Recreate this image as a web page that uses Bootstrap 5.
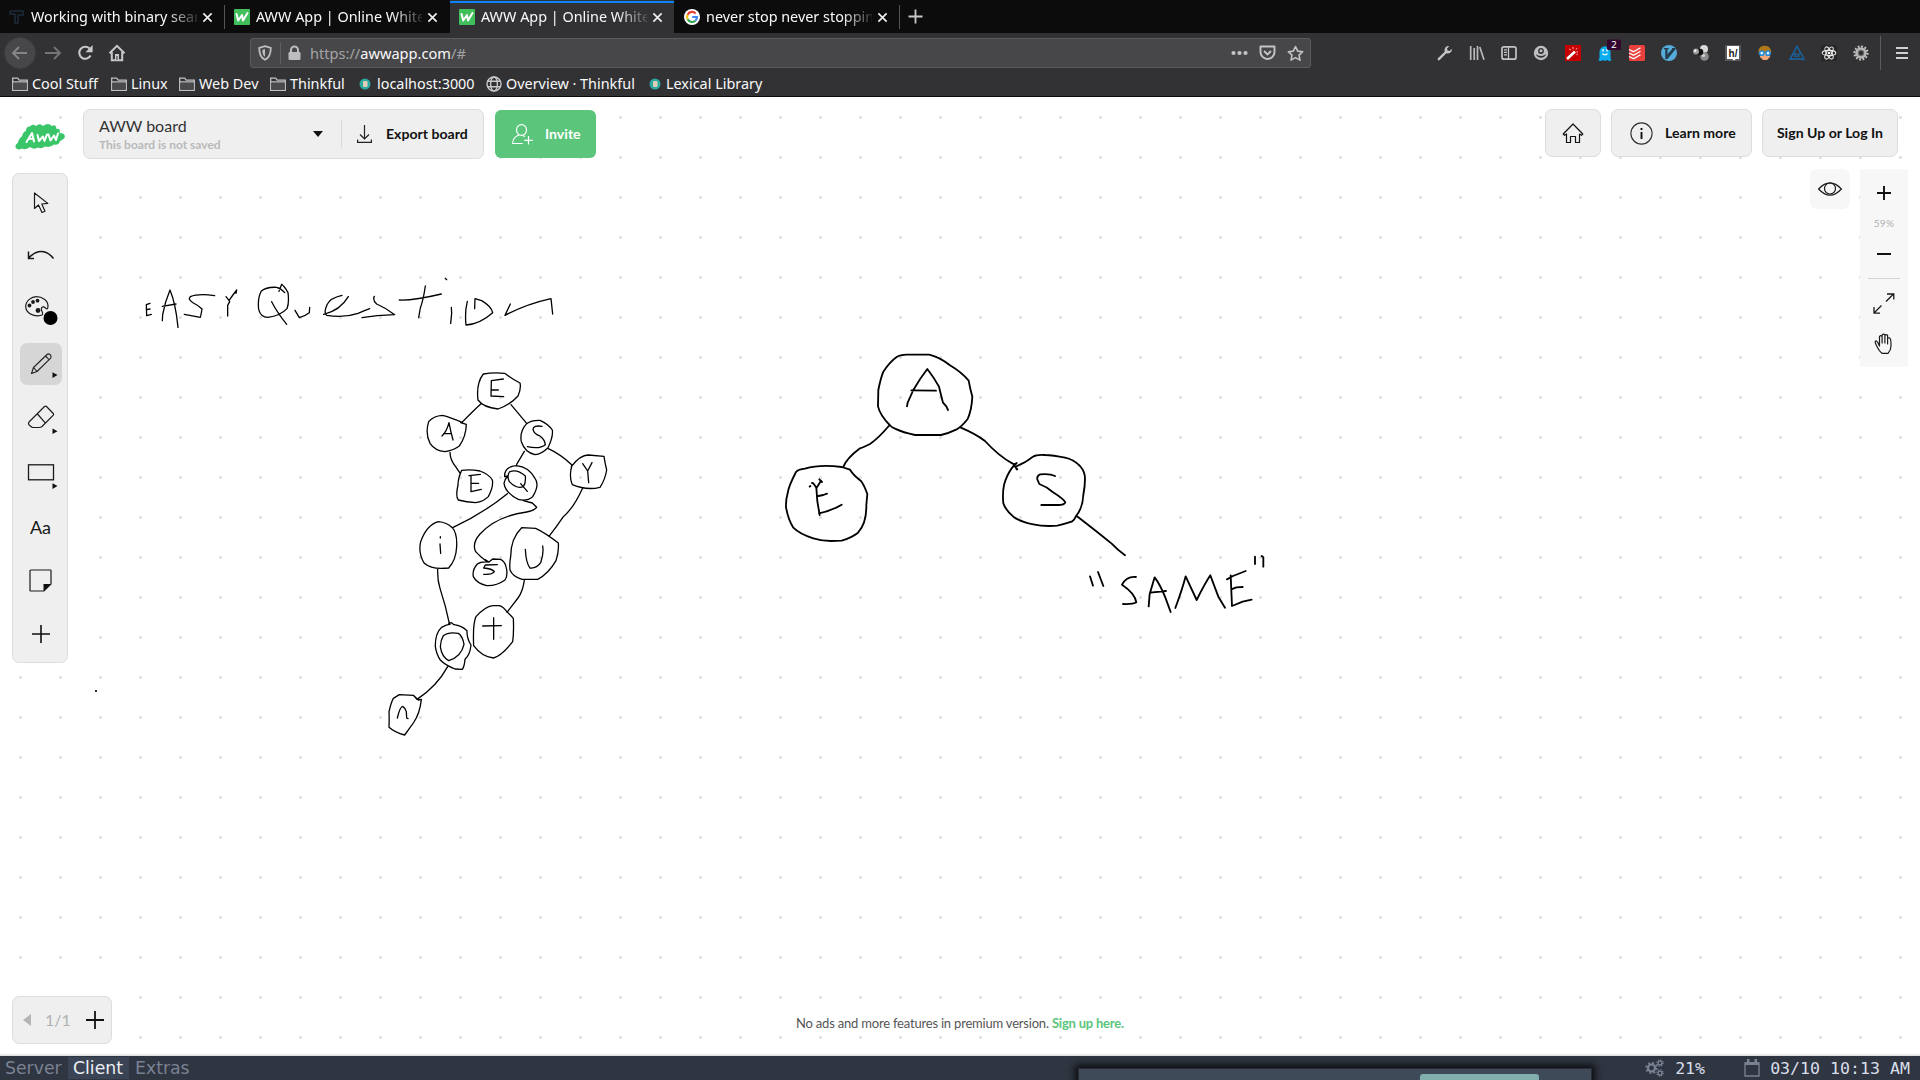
<!DOCTYPE html>
<html lang="en">
<head>
<meta charset="utf-8">
<title>AWW App | Online Whiteboard</title>
<link rel="stylesheet" href="https://cdn.jsdelivr.net/npm/bootstrap@5.3.0/dist/css/bootstrap.min.css">
<style>
body{width:1920px;height:1080px;overflow:hidden;font-family:"Noto Sans",sans-serif;font-size:14.4px;line-height:1.2;color:#f9f9fa;background:#fff}
svg{display:block;flex:none}
.tabstrip{height:33px;background:#0c0c0d}
.tab-item{width:225px;height:33px;padding:1px 0 0 9px;position:relative}
.tab-item.sep::after{content:"";position:absolute;right:0;top:5px;width:1px;height:24px;background:#555557}
.tab-item.current{background:#323234;width:224px;margin-right:1px}
.tab-item.current::before{content:"";position:absolute;left:0;right:0;top:1px;height:2px;background:#0a84ff}
.tab-label{width:166px;margin-left:6px;white-space:nowrap;-webkit-mask-image:linear-gradient(90deg,#000 82%,rgba(0,0,0,.12) 100%);mask-image:linear-gradient(90deg,#000 82%,rgba(0,0,0,.12) 100%)}
.tab-x{margin-left:5px}
.navstrip{height:40px;background:#323234}
.back-btn{width:32px;height:32px;border-radius:50%;background:#474749;border:1px solid #3e3e40;margin-left:4px}
.urlbox{width:1061px;height:30px;margin-left:124px;background:#474749;border:1px solid #5c5c5e;border-radius:3px}
.urltext{color:#a4a4a6;font-size:14.6px}
.urltext b{color:#f9f9fa;font-weight:400}
.exts{gap:16px}
.exts svg{overflow:visible}
.vline{width:1px;height:34px;background:#5c5c5e}
.bookstrip{height:24px;background:#323234;border-bottom:1px solid #0c0c0d;padding:0 0 2px 12px}
.bm{gap:4px;white-space:nowrap}
.board{height:959px;position:relative;background:#fff radial-gradient(circle at 20.5px 20.5px,#e0e0e0 1.2px,transparent 1.9px);background-size:40px 40px;font-family:Lato,sans-serif;color:#1a1a1a}
.ink{position:absolute;left:0;top:0;z-index:0}
.board>div{position:relative;z-index:1}
.panel-box{background:#efefef;border:1px solid #ddd;border-radius:7px}
.hdr{height:72px;padding:12px 22px 0 12px}
.board-box{width:401px;height:50px;margin-left:15px}
.bold-lbl{font-weight:700;font-size:14.1px;color:#111;white-space:nowrap;padding-top:1px}
.invite{width:101px;height:48px;border-radius:6px;background:#5ac57b;color:#fff;margin-top:1px;margin-left:11px}
.hbtn{height:48px}
.mid{height:495px;padding:0 12px}
.toolbox{width:56px;height:490px;margin-top:4px;padding:1px 0 0 1px}
.tool{width:54px;height:54px;position:relative}
.tool.sel::before{content:"";position:absolute;inset:6px;border-radius:7px;background:#d6d6d6}
.tool svg{position:relative}
.eyebox{width:40px;height:40px;border-radius:7px;background:#f7f7f7}
.zoombox{width:48px;height:198px;background:#f7f7f7;margin-left:10px}
.pager{width:100px;height:48px}
.note{font-size:13px;letter-spacing:-.2px;color:#555;white-space:nowrap}
.note b{color:#5ac57b}
.edge{position:absolute!important;left:0;right:0;bottom:0;height:3px;background:linear-gradient(#fff,#dcdcdc)}
.osbar{height:24px;background:#2f3541;position:relative;overflow:hidden;font-family:"DejaVu Sans",sans-serif;font-size:17.3px;color:#7b8293}
.osbar .on{background:#3b4454;color:#eceff4;height:22px}
.osbar .mono{font-family:"DejaVu Sans Mono",monospace;font-size:16.6px;color:#d8dee9;white-space:pre;padding-top:2px}
.popwin{position:absolute;left:1078px;top:12px;width:514px;height:30px;background:#3f4a58;border:1px solid #272c35;box-shadow:0 0 7px 3px #0a0c10}
.popwin i{position:absolute;left:341px;top:5px;width:119px;height:20px;border-radius:3px;background:#83aeae}
</style>
<script src="https://cdn.jsdelivr.net/npm/bootstrap@5.3.0/dist/js/bootstrap.bundle.min.js"></script>
</head>
<body>
<svg width="0" height="0" class="position-absolute">
<defs>
<symbol id="x" viewBox="0 0 12 12"><path d="M1.500 1.500l9 9M10.500 1.500l-9 9" stroke="#f0f0f0" stroke-width="1.800" fill="none"/></symbol>
<symbol id="fold" viewBox="0 0 16 16"><path d="M.7 14V2.200h5l1.500 2h8.100V14.300H.7zM.7 6h14.600" fill="none" stroke="#c0c0c2" stroke-width="1.300"/><path d="M1.300 6.600h13.400v7H1.300z" fill="#4a4a4c"/></symbol>
<symbol id="lex" viewBox="0 0 12 12"><circle cx="6" cy="6" r="5.500" fill="#2ba8a0"/><rect x="4" y="3" width="4.500" height="6" rx="1" fill="#e0cdb8"/></symbol>
<symbol id="wfav" viewBox="0 0 16 16"><rect width="16" height="16" rx="1" fill="#40bf5b"/><path d="M2.500 5l1.700 6.500L8 6l1 5.500L13.500 4" fill="none" stroke="#fff" stroke-width="2" stroke-linejoin="round" stroke-linecap="round"/></symbol>
</defs>
</svg>
<div class="d-flex flex-column">
<div class="tabstrip d-flex">
 <div class="tab-item sep d-flex align-items-center"><svg width="16" height="16" viewBox="0 0 16 16"><path d="M1 2h13v5M1 2v3h5M6 5v9h3V6h4" fill="none" stroke="#1d2b38" stroke-width="1.500"/></svg><span class="tab-label">Working with binary sear</span><svg class="tab-x" width="11" height="11"><use href="#x"/></svg></div>
 <div class="tab-item d-flex align-items-center"><svg width="16" height="16"><use href="#wfav"/></svg><span class="tab-label">AWW App | Online White</span><svg class="tab-x" width="11" height="11"><use href="#x"/></svg></div>
 <div class="tab-item current d-flex align-items-center"><svg width="16" height="16"><use href="#wfav"/></svg><span class="tab-label">AWW App | Online White</span><svg class="tab-x" width="11" height="11"><use href="#x"/></svg></div>
 <div class="tab-item sep d-flex align-items-center"><svg width="16" height="16" viewBox="0 0 16 16"><circle cx="8" cy="8" r="8" fill="#fff"/><g fill="none" stroke-width="2.200"><path d="M11.700 4.400A5 5 0 0 0 3.600 5.700" stroke="#ea4335"/><path d="M3.600 5.700a5 5 0 0 0 0 4.600" stroke="#fbbc05"/><path d="M3.600 10.300a5 5 0 0 0 7.800 1.400" stroke="#34a853"/><path d="M11.400 11.700A5 5 0 0 0 13 8H8.200" stroke="#4285f4"/></g></svg><span class="tab-label">never stop never stoppin</span><svg class="tab-x" width="11" height="11"><use href="#x"/></svg></div>
 <svg style="margin:8px 0 0 7px" width="17" height="17" viewBox="0 0 17 17"><path d="M8.500 1.500v14M1.500 8.500h14" stroke="#c8c8ca" stroke-width="1.800"/></svg>
</div>
<div class="navstrip d-flex align-items-center">
 <div class="back-btn d-flex align-items-center justify-content-center"><svg width="18" height="16" viewBox="0 0 18 16"><path d="M16 8H2.500M8 2L2 8l6 6" fill="none" stroke="#858587" stroke-width="1.900"/></svg></div>
 <svg class="ms-2" width="18" height="16" viewBox="0 0 18 16"><path d="M1 8h14M10 2l6 6-6 6" fill="none" stroke="#747476" stroke-width="1.900"/></svg>
 <svg style="margin-left:15px" width="16" height="18" viewBox="0 0 16 18"><path d="M13.600 11.500A6 6 0 1 1 12.500 4.500" fill="none" stroke="#c8c8ca" stroke-width="2.100"/><path d="M15.600 1v7.300H8.500z" fill="#c8c8ca"/></svg>
 <svg style="margin-left:15px" width="18" height="18" viewBox="0 0 18 18"><path d="M1.500 9.300L9 1.800l7.500 7.500M3.800 8v8.200h10.400V8" fill="none" stroke="#c8c8ca" stroke-width="2"/><path d="M7 16v-6h4v6z" fill="#c8c8ca"/><path d="M8.500 12h1v4h-1z" fill="#323234"/></svg>
 <div class="urlbox d-flex align-items-center">
  <svg style="margin-left:7px" width="14" height="16" viewBox="0 0 14 16"><path d="M7 1.200L12.800 3c0 5.500-1 9.500-5.800 11.800C2.200 12.500 1.200 8.500 1.200 3z" fill="none" stroke="#bdbdbf" stroke-width="1.800"/><path d="M7 4v7.800C5 10.500 4.400 8 4.300 4.900z" fill="#bdbdbf"/></svg>
  <i class="d-block" style="width:1px;height:22px;margin-left:8px;background:#5f5f61"></i>
  <svg style="margin-left:7px" width="13" height="16" viewBox="0 0 13 16"><path d="M3 7V5a3.500 3.500 0 0 1 7 0v2" fill="none" stroke="#bdbdbf" stroke-width="2"/><rect x=".5" y="7" width="12" height="8" rx="1.200" fill="#bdbdbf"/></svg>
  <span class="urltext" style="margin-left:9px;padding-top:1px">https://<b>awwapp.com</b>/#</span>
  <svg class="ms-auto" width="17" height="16" viewBox="0 0 17 16"><g fill="#c4c4c6"><circle cx="2.500" cy="8" r="2.100"/><circle cx="8.500" cy="8" r="2.100"/><circle cx="14.500" cy="8" r="2.100"/></g></svg>
  <svg style="margin-left:11px" width="17" height="16" viewBox="0 0 17 16"><path d="M1.500 1.500h14V7a7 7 0 0 1-14 0z" fill="none" stroke="#c4c4c6" stroke-width="1.900" stroke-linejoin="round"/><path d="M5 6l3.500 3.500L12 6" fill="none" stroke="#c4c4c6" stroke-width="1.900"/></svg>
  <svg style="margin:0 6px 0 11px" width="17" height="17" viewBox="0 0 17 17"><path d="M8.500 1.500l2.200 4.600 5 .6-3.700 3.400 1 5-4.500-2.500-4.500 2.500 1-5L1.300 6.700l5-.6z" fill="none" stroke="#c4c4c6" stroke-width="1.600" stroke-linejoin="round"/></svg>
 </div>
 <div class="exts d-flex align-items-center" style="margin-left:126px">
  <svg width="16" height="16" viewBox="0 0 16 16"><path d="M1.800 14.200l7.700-7.700" stroke="#c4c4c6" stroke-width="2.400" stroke-linecap="round"/><path d="M12.200 1.200A4 4 0 0 0 7.700 6.500l1.800 1.800a4 4 0 0 0 5.300-4.500L12.500 6l-2-.5-.5-2z" fill="#c4c4c6"/></svg>
  <svg width="16" height="16" viewBox="0 0 16 16"><path d="M1.700 1v14M5.200 3v12M8.500 1v14M10.800 2l4.200 12.700" stroke="#b8b8ba" stroke-width="1.700"/></svg>
  <svg width="16" height="16" viewBox="0 0 16 16"><rect x="1" y="1.800" width="14" height="12.400" rx="2" fill="none" stroke="#c4c4c6" stroke-width="1.700"/><path d="M7.500 2v12M3 4.800h3M3 7.300h3M3 9.800h3" stroke="#c4c4c6" stroke-width="1.300"/></svg>
  <svg width="16" height="16" viewBox="0 0 16 16"><circle cx="8" cy="8" r="7.200" fill="#c0c0c2"/><circle cx="8" cy="6" r="2.900" fill="#323234"/><circle cx="8" cy="5.700" r="1.500" fill="#c0c0c2"/><path d="M3 9c.9 5 9.100 5 10 0-2.500 2.600-7.500 2.600-10 0z" fill="#323234"/></svg>
  <svg width="16" height="16" viewBox="0 0 16 16"><rect width="16" height="16" fill="#c60000"/><path d="M2 14l8-7.500" stroke="#fff" stroke-width="2.600"/><path d="M4 4l2 1M8 2v2M12 3l-1 1.500M13 7h-1.500M12.500 10l-1-1" stroke="#ff8a8a" stroke-width="1.300"/></svg>
  <svg width="16" height="16" viewBox="0 0 16 16"><path d="M2.500 13V7a5.500 5.800 0 0 1 11 0v6l1 2.500-2.500.5-2-1-2 1-2-1-2 1-2.500-.5z" fill="#0aaef0"/><path d="M6 4v2.500M10 4v2.500M5.500 8.500c1 1.800 4 1.800 5 0" stroke="#fff" stroke-width="1.400" fill="none"/><rect x="10" y="-5.500" width="14" height="10.500" rx="1.500" fill="#34062f"/><text x="17" y="3" font-size="9.500" fill="#fff" text-anchor="middle" font-family="Noto Sans">2</text></svg>
  <svg width="16" height="16" viewBox="0 0 16 16"><rect width="16" height="16" rx="1.500" fill="#e8403c"/><path d="M0 4.500l4.500 2.200 7-4M0 8l4.500 2.200 7-4M0 11.500l4.500 2.200 7-4" stroke="#fff" stroke-width="1.300" fill="none"/></svg>
  <svg width="16" height="16" viewBox="0 0 16 16"><circle cx="8" cy="8" r="8" fill="#55acd9"/><path d="M3 3h4.500v1.300h-1v5L11 4.300V3h3.500v1.300L6.500 14H4.300V4.300H3z" fill="#243b4d"/></svg>
  <svg width="16" height="16" viewBox="0 0 16 16"><circle cx="11" cy="4" r="4" fill="#d8d8d8"/><circle cx="11.500" cy="11.500" r="4.300" fill="#8b8b8b"/><circle cx="10.500" cy="10.500" r="1.600" fill="#d5d5d5"/><circle cx="7" cy="7" r="3.300" fill="#111"/><circle cx="3" cy="6.500" r="3" fill="#9b9b9b"/><circle cx="2.300" cy="5.700" r="1.200" fill="#fff"/></svg>
  <svg width="16" height="16" viewBox="0 0 16 16"><rect width="16" height="16" rx="1" fill="#58585a"/><path d="M2 1h12v13h-3l-2 1.500L7 14H2z" fill="#fff"/><text x="8" y="11.500" font-size="10" font-weight="700" fill="#222" text-anchor="middle" font-family="Liberation Sans">h/</text></svg>
  <svg width="16" height="16" viewBox="0 0 16 16"><path d="M2 10C0 3 4 .8 8 .8S15 4 14 9z" fill="#b07818"/><path d="M3 7.500h10v4.500l-3 3H6l-3-3z" fill="#f0a878"/><circle cx="4.800" cy="8.200" r="2.100" fill="#e8f5ff" stroke="#1d8be0" stroke-width="1.500"/><circle cx="11" cy="8.200" r="2.100" fill="#e8f5ff" stroke="#1d8be0" stroke-width="1.500"/></svg>
  <svg width="16" height="16" viewBox="0 0 16 16"><path d="M13 14H1L8 1.500l6.200 11" fill="none" stroke="#1767a8" stroke-width="1.400"/><circle cx="14.200" cy="14" r="1.200" fill="none" stroke="#1767a8"/><text x="8" y="12.300" font-size="6.500" font-weight="700" fill="#1767a8" text-anchor="middle" font-family="Liberation Sans">ax</text></svg>
  <svg width="16" height="16" viewBox="0 0 16 16"><rect width="16" height="16" rx="1" fill="#262627"/><g fill="none" stroke="#e8e8e8" stroke-width="1.100"><ellipse cx="8" cy="8" rx="6.800" ry="2.600"/><ellipse cx="8" cy="8" rx="6.800" ry="2.600" transform="rotate(60 8 8)"/><ellipse cx="8" cy="8" rx="6.800" ry="2.600" transform="rotate(120 8 8)"/></g><circle cx="8" cy="8" r="1.300" fill="#fff"/></svg>
  <svg width="16" height="16" viewBox="0 0 16 16"><circle cx="8" cy="8" r="6.600" fill="none" stroke="#c8c8c8" stroke-width="2" stroke-dasharray="1.800 1.650"/><circle cx="8" cy="8" r="4.500" fill="#6a6a6a" stroke="#b8b8b8" stroke-width="2.600"/><circle cx="8" cy="8" r="2" fill="#2b2b2b"/></svg>
 </div>
 <div class="vline" style="margin-left:11px"></div>
 <svg style="margin-left:15px" width="12" height="14" viewBox="0 0 12 14"><path d="M0 2h12M0 7h12M0 12h12" stroke="#d0d0d2" stroke-width="1.900"/></svg>
</div>
<div class="bookstrip d-flex align-items-center">
 <span class="bm d-flex align-items-center" style="width:99px"><svg width="16" height="16"><use href="#fold"/></svg>Cool Stuff</span>
 <span class="bm d-flex align-items-center" style="width:68px"><svg width="16" height="16"><use href="#fold"/></svg>Linux</span>
 <span class="bm d-flex align-items-center" style="width:91px"><svg width="16" height="16"><use href="#fold"/></svg>Web Dev</span>
 <span class="bm d-flex align-items-center" style="width:89px"><svg width="16" height="16"><use href="#fold"/></svg>Thinkful</span>
 <span class="bm d-flex align-items-center" style="width:127px;gap:6px"><svg width="12" height="12"><use href="#lex"/></svg>localhost:3000</span>
 <span class="bm d-flex align-items-center" style="width:163px"><svg width="16" height="16" viewBox="0 0 16 16"><g fill="none" stroke="#c8c8ca" stroke-width="1.400"><circle cx="8" cy="8" r="7"/><ellipse cx="8" cy="8" rx="3.400" ry="7"/><path d="M1.500 5.300h13M1.500 10.700h13"/></g></svg>Overview · Thinkful</span>
 <span class="bm d-flex align-items-center" style="gap:5px"><svg width="12" height="12"><use href="#lex"/></svg>Lexical Library</span>
</div>
<div class="board d-flex flex-column">
 <svg class="ink" width="1920" height="959" viewBox="0 97 1920 959" fill="none" stroke="#000" stroke-linecap="round" stroke-linejoin="round">
  <circle cx="96" cy="691" r="1.100" fill="#000" stroke="none"/>
  <!-- freehand pencil strokes -->
  <g transform="translate(130 270) scale(.33333)" stroke-width="3.900">
   <path d="M60 100L49 104 50 137 64 133M49 119L60 117M97 152L98 134Q105 95 120 60 137 100 144 172M97 109L138 102M254 77Q205 70 181 80 172 88 190 99 207 107 216 117 213 135 211 142L163 133M288 80L297 91M318 70L320 60Q306 78 297 92M293 138L293 106 299 95M447 64L455 43Q464 50 474 68 478 98 471 116 450 138 414 142 392 142 386 118 382 85 394 63 410 50 440 52 455 56 464 68M425 95Q440 125 470 163M495 121L508 143Q525 138 538 128L539 112M581 133Q630 122 655 80M636 76Q600 84 591 104 580 130 590 136 640 145 684 130 703 122 719 116M733 79Q727 90 740 102 770 115 794 134 740 136 696 143M808 90Q850 92 934 72M886 48Q880 90 871 114L866 143M946 25L950 29M964 112L965 130 962 160M1012 94Q1004 125 1008 165 1050 162 1088 128 1085 110 1055 92L1035 86 1034 116M1141 102L1125 136Q1190 102 1263 86L1268 132"/>
  </g>
  <g transform="translate(370 350) scale(.33333)" stroke-width="3.900">
   <path d="M324 150Q318 100 340 72 372 66 404 70 428 88 450 99 454 115 444 138 420 165 384 177 340 172 324 150M364 92L400 87M364 92L363 138 401 140M363 120L385 120M333 161Q310 182 275 218M272 218L289 223Q288 260 268 288 248 302 225 305 195 302 180 280 165 250 176 215 190 198 217 196 240 201 278 218M216 258Q230 245 237 218 242 245 249 270M221 251L244 250M423 164L470 220M470 221Q485 210 510 211 535 222 547 240 550 260 534 293 515 312 495 314 465 307 454 275 448 245 470 221M516 229Q490 225 489 238 492 252 510 258 524 268 526 284 510 298 472 290M240 307Q240 330 257 350L271 371M268 378L275 361Q300 357 330 363 356 372 367 390 371 410 355 440 340 455 317 458 290 456 265 450 256 440 264 405 264 385 275 361M297 377L331 373M303 377L303 425 334 418M303 400L326 400M463 304L440 343M413 378L404 380Q402 350 440 347 475 350 495 385 510 405 488 440 470 455 445 448 407 430 402 400 404 388 413 378M418 366Q440 355 466 378 468 400 460 410 440 418 418 395 410 380 418 366M452 401L472 424M535 296Q570 312 605 344M604 350Q630 315 655 315L702 319 Q705 340 710 360 705 390 690 412 650 422 607 404 596 380 606 345M638 341L653 363 666 338M653 363L656 398M637 416Q610 475 580 500 560 530 537 559M412 431Q340 490 248 533M247 533Q230 517 205 515 170 525 152 575 144 610 163 640 185 660 236 654 258 630 260 590 262 550 247 533M211 560L211 564M210 582L212 610M460 452L487 459 500 472Q490 483 470 486 380 498 330 552 305 580 317 605 330 620 352 636M352 636L345 629 357 636 368 627 392 628Q405 635 408 650 415 675 405 690 380 708 350 707 320 700 310 680 306 660 322 642 333 634 357 636M382 644L346 645 341 654Q367 656 373 665 366 675 341 673M422 620Q422 565 455 533L497 535Q525 548 565 579 567 605 558 632 535 672 503 688L456 688Q428 680 420 660 418 640 422 620M466 598Q468 640 480 654 500 656 512 638 522 610 518 588M203 657Q202 690 210 715 228 770 238 820M463 691Q458 725 444 744 428 765 411 787M412 787Q400 770 388 767L368 767Q345 770 318 800 308 820 311 887 335 920 370 924 395 918 428 875 432 850 430 805 420 794 412 787M371 803L371 868M338 828L394 827M240 823L236 820 244 818 252 824Q275 827 291 842 290 865 303 885 300 915 285 928 283 950 277 958L255 957Q225 945 211 930 200 915 196 890 195 850 215 832 230 823 240 823M220 857Q235 845 265 850 278 858 282 883 274 920 236 932 215 920 211 890 212 870 220 857M233 950Q200 1010 141 1048M130 1036L145 1050 154 1048Q150 1090 130 1119L104 1155Q75 1148 57 1132 58 1100 57 1085 64 1055 70 1045L88 1034 130 1036 141 1048M82 1104Q90 1070 98 1069 106 1074 109 1085L110 1104 114 1106"/>
  </g>
  <g transform="translate(770 340) scale(.33333)" stroke-width="5.500">
   <path d="M359 255Q330 225 324 199L325 150Q332 115 340 95 360 65 380 51 390 45 410 44L478 44Q510 52 540 76 575 97 596 122 600 145 607 170 605 210 593 237 575 260 560 268 535 280 513 285L435 285Q400 278 375 266 365 262 359 255M411 199L413 188 430 150Q450 115 472 87 490 110 507 140 513 165 519 188L529 199 534 210M424 151L498 152M359 255Q325 295 300 312 280 322 270 325 230 355 219 382M240 389L215 381Q150 372 105 386 85 388 78 396 55 440 53 460 47 480 48 502 55 540 70 563 90 583 130 595 155 603 183 603L215 602Q245 593 264 578 290 550 289 495L292 462Q280 430 272 422 250 405 240 389M119 440L121 438M126 429L130 430 139 443 142 484 149 525M139 445L153 422M148 418L156 426M145 468L160 465 171 461M147 520Q185 512 215 494M571 262Q620 283 645 303 685 347 728 371L737 373M740 369L732 375M740 388L736 380Q765 370 789 350 800 343 825 345 850 346 885 353 910 358 930 378 945 395 945 415 945 440 940 465 938 505 918 528 915 538 905 545 880 553 862 557 820 560 790 553 755 548 730 530 705 508 700 490 697 460 702 435 710 405 725 385L732 376 742 388M855 408Q840 400 810 403 800 408 802 418L808 432Q830 440 848 456 880 476 886 487 882 495 865 495L814 495M920 528Q985 578 1025 611 1043 630 1065 646M960 709L969 737M984 696L1000 738M1098 711Q1070 708 1056 734 1095 760 1099 787 1090 793 1059 792M1136 799L1139 762 1154 712Q1170 733 1185 770L1202 816M1141 758L1188 753M1216 804Q1237 748 1247 709L1280 780Q1305 730 1321 706L1345 770 1365 803M1371 718L1389 708 1427 693M1382 706L1386 798 1418 785 1445 779M1384 748L1399 742 1418 741M1455 650L1455 672M1475 648L1480 652 1480 680"/>
  </g>
 </svg>
 <div class="hdr d-flex align-items-start">
  <svg style="margin-top:11px" width="56" height="30" viewBox="0 0 56 30"><path d="M3.500 27.500Q3 25 6 22.500 7 18 10 16.500 11 11.500 14 11 14 6 18 6.500 20 3.500 24 6 28 2.500 31 6 36 2 40 6 44 3.500 44.500 9 49 8 47.500 13 54 13 52.500 18 50 20.500 48 21 47 25.500 42 24.500 38 28 33 26.500 29 29.500 26 27.500 22 30 18 27 13 30.500 10 28.500 6 31 3.500 27.500z" fill="#3ac569"/><path d="M14.500 22l5.500-9 2 8.500M16.500 19l5-.5M25.500 15l1.500 6 4-4.500 1.500 4.500 2.500-6.500M36.500 14.500l2 6 3.500-5 2 4.500 2-6.500" fill="none" stroke="#fff" stroke-width="2" stroke-linecap="round" stroke-linejoin="round"/></svg>
  <div class="board-box panel-box d-flex align-items-center">
   <div style="width:215px;padding:2px 0 0 15px"><div style="font-size:16px;color:#333;line-height:19px">AWW board</div><div style="font-size:12px;font-weight:700;color:#b9b9b9;line-height:20px">This board is not saved</div></div>
   <svg style="margin-left:14px" width="10" height="6"><path d="M0 0h10L5 6z" fill="#111"/></svg>
   <i class="d-block" style="width:1px;height:28px;background:#d9d9d9;margin-left:18px"></i>
   <svg style="margin-left:15px" width="15" height="18" viewBox="0 0 15 18"><path d="M7.500 0v13.500M3 9.500l4.500 4.500L12 9.500M.6 14.500v2.900h13.800v-2.900" fill="none" stroke="#222" stroke-width="1.200"/></svg>
   <span class="bold-lbl" style="margin-left:14px">Export board</span>
  </div>
  <div class="invite d-flex align-items-center"><svg style="margin-left:17px" width="22" height="21" viewBox="0 0 22 21"><ellipse cx="9.500" cy="6" rx="5" ry="5.400" fill="none" stroke="#fff" stroke-width="1.200"/><path d="M7 11C2.500 12.500.7 15 .7 19.500h10M10.500 11.500l2.500 1M16.500 12v8.500M12.300 16.300h8.500" fill="none" stroke="#fff" stroke-width="1.200"/></svg><span class="bold-lbl text-white" style="margin-left:11px">Invite</span></div>
  <div class="ms-auto d-flex">
   <div class="panel-box hbtn d-flex align-items-center justify-content-center" style="width:56px"><svg width="22" height="21" viewBox="0 0 22 21"><path d="M11 1L1.200 11l1.300 1.300L4.500 11v8.500h4v-6h5v6h4V11l2 1.300 1.300-1.300z" fill="none" stroke="#111" stroke-width="1.200" stroke-linejoin="round"/></svg></div>
   <div class="panel-box hbtn d-flex align-items-center" style="width:141px;margin-left:10px"><svg style="margin-left:18px" width="23" height="23" viewBox="0 0 23 23"><circle cx="11.500" cy="11.500" r="10.600" fill="none" stroke="#333" stroke-width="1.100"/><path d="M11.500 10v7M11.500 6v2" stroke="#111" stroke-width="1.900"/></svg><span class="bold-lbl" style="margin-left:12px">Learn more</span></div>
   <div class="panel-box hbtn d-flex align-items-center justify-content-center" style="width:136px;margin-left:10px"><span class="bold-lbl">Sign Up or Log In</span></div>
  </div>
 </div>
 <div class="mid d-flex align-items-start">
  <div class="toolbox panel-box d-flex flex-column align-items-center">
   <div class="tool d-flex align-items-center justify-content-center"><svg style="margin-top:2px" width="16" height="22" viewBox="0 0 16 22"><path d="M1.500 1v15.500L5.500 13l3.500 7.500 3-1.200L8.800 12l6-.6z" fill="none" stroke="#1a1a1a" stroke-width="1.200" stroke-linejoin="round"/></svg></div>
   <div class="tool d-flex align-items-center justify-content-center"><svg width="28" height="12" viewBox="0 0 28 12"><path d="M1.500 1.500v7H7M1.500 8Q8 1.500 14 1.500 21 1.500 26.500 8.500" fill="none" stroke="#1a1a1a" stroke-width="1.500"/></svg></div>
   <div class="tool d-flex align-items-center justify-content-center"><svg width="34" height="30" viewBox="0 0 34 30"><path d="M18.500 19.700C14 22 2 20.500 1.700 11.500 1.700 5.500 7.500 1.700 12.500 1.700 18 1.700 24 5.500 24 11c0 2-.6 3.500-2 2.500-1.600-2-3.500-2-4.500-.5-1.200 2.300 2.300 4.800 1 6.700z" fill="none" stroke="#1a1a1a" stroke-width="1.200"/><g fill="#1a1a1a"><circle cx="5.500" cy="10.500" r="1.900"/><circle cx="9" cy="7" r="1.900"/><circle cx="13.500" cy="5.700" r="1.900"/><circle cx="14" cy="15.500" r="2.400"/></g><circle cx="26.500" cy="23" r="7" fill="#000"/></svg></div>
   <div class="tool sel d-flex align-items-center justify-content-center"><svg width="34" height="28" viewBox="0 0 34 28"><path d="M7.500 23.500l2-6L23 4.500c2-1.600 5.300 1 3.700 3.700L13 21.500zM9.500 17.500l3.500 4M21.500 6l3.800 3.800" fill="none" stroke="#222" stroke-width="1.100" stroke-linejoin="round"/><path d="M28.500 22.300l5 2.800-5 2.800z" fill="#111"/></svg></div>
   <div class="tool d-flex align-items-center justify-content-center"><svg width="34" height="34" viewBox="0 0 34 34"><path d="M5.500 20.500L20.500 5.500c.7-.6 1.400-.6 2 0l6.800 7c.6.600.6 1 0 1.700L18 25.500c-1 .8-1.700 1-3 1H9c-1.200 0-4.500-2.500-4.500-4 0-.7.300-1.300 1-2zM13.500 13l7.500 8.700" fill="none" stroke="#1a1a1a" stroke-width="1.200"/><path d="M28.500 27.500l5 2.800-5 2.800z" fill="#111"/></svg></div>
   <div class="tool d-flex align-items-center justify-content-center"><svg width="34" height="34" viewBox="0 0 34 34"><rect x="4.500" y="9.800" width="25" height="15" fill="none" stroke="#1a1a1a" stroke-width="1.300"/><path d="M28.500 28.300l5 2.800-5 2.800z" fill="#111"/></svg></div>
   <div class="tool d-flex align-items-center justify-content-center" style="font-size:18px;padding-top:3px">Aa</div>
   <div class="tool d-flex align-items-center justify-content-center"><svg width="23" height="23" viewBox="0 0 23 23"><path d="M2 1h19.500q.5 0 .5.500V15l-7 7H1.500Q1 22 1 21.500V1.500z" fill="none" stroke="#1a1a1a" stroke-width="1.200"/><path d="M14.500 22v-7H22z" fill="#111"/></svg></div>
   <div class="tool d-flex align-items-center justify-content-center"><svg width="18" height="18"><path d="M9 0v18M0 9h18" stroke="#111" stroke-width="1.600"/></svg></div>
  </div>
  <div class="eyebox ms-auto d-flex align-items-center justify-content-center"><svg width="24" height="14" viewBox="0 0 24 14"><path d="M.6 7Q12-5.400 23.400 7 12 19.400.6 7z" fill="none" stroke="#1a1a1a" stroke-width="1.200"/><circle cx="12" cy="6.500" r="5.500" fill="none" stroke="#1a1a1a" stroke-width="1.200"/></svg></div>
  <div class="zoombox d-flex flex-column align-items-center">
   <svg style="margin-top:17px" width="14" height="14"><path d="M7 0v14M0 7h14" stroke="#111" stroke-width="1.900"/></svg>
   <span style="font-size:10px;line-height:12px;color:#b0b0b0;margin-top:17px;letter-spacing:.3px">59%</span>
   <svg style="margin-top:24px" width="14" height="2"><path d="M0 1h14" stroke="#111" stroke-width="2"/></svg>
   <i class="d-block" style="width:32px;height:1px;background:#d5d5d5;margin-top:23px"></i>
   <svg style="margin-top:14px" width="22" height="21" viewBox="0 0 22 21"><path d="M13 8.500l7.500-7.500M14 1h6.800v5.500M8.500 12.500L1 20M1 14v6.200h6" fill="none" stroke="#1a1a1a" stroke-width="1.300"/></svg>
   <svg style="margin-top:19px" width="20" height="21" viewBox="0 0 20 21"><path d="M5.500 13V3.500q1.300-1.800 2.600 0V10 2q1.300-1.900 2.800 0v8V2.500q1.300-1.700 2.700 0V11 5.500q1.300-1.500 2.600 0 .8 1 .8 7.500c0 3-1 5-3 7.300H8C5.500 18.500 4 16 2 11.500 0 7.500 2.500 7 3.800 9.500z" fill="none" stroke="#1a1a1a" stroke-width="1.200" stroke-linejoin="round"/></svg>
  </div>
 </div>
 <div class="d-flex mt-auto align-items-center" style="padding:0 0 12px 12px">
  <div class="pager panel-box d-flex align-items-center"><svg style="margin-left:10px" width="8" height="12"><path d="M8 0v12L0 6z" fill="#b5b5b5"/></svg><span style="font-size:16px;color:#b0b0b0;margin-left:14px;width:28px">1/1</span><svg style="margin-left:13px" width="18" height="18"><path d="M9 0v18M0 9h18" stroke="#111" stroke-width="1.800"/></svg></div>
  <div class="note" style="margin-left:684px;margin-top:8px">No ads and more features in premium version. <b>Sign up here.</b></div>
 </div>
 <div class="edge"></div>
</div>
<div class="osbar d-flex align-items-center">
 <span style="margin-left:5px;width:63px">Server</span><span class="on d-flex align-items-center" style="width:61px;padding-left:5px">Client</span><span style="margin-left:6px">Extras</span>
 <div class="ms-auto d-flex align-items-center" style="padding-right:10px">
  <svg width="19" height="18" viewBox="0 0 19 18"><g fill="none" stroke="#7b8293"><circle cx="6.500" cy="9" r="5.200" stroke-width="1.800" stroke-dasharray="2 2.080"/><circle cx="6.500" cy="9" r="3.500" stroke-width="2.200"/><circle cx="15" cy="4" r="3" stroke-width="1.500" stroke-dasharray="1.200 1.150"/><circle cx="15" cy="4" r="1.900" stroke-width="1.300"/><circle cx="15" cy="14" r="3" stroke-width="1.500" stroke-dasharray="1.200 1.150"/><circle cx="15" cy="14" r="1.900" stroke-width="1.300"/></g></svg>
  <span class="mono" style="margin-left:11px;width:69px">21%</span>
  <svg width="16" height="18" viewBox="0 0 16 18"><path d="M1 4h14v13H1z" fill="none" stroke="#7b8293" stroke-width="1.300"/><path d="M1 3h14v3H1zM3 0h2.500v4H3zM10.500 0H13v4h-2.500z" fill="#7b8293"/></svg>
  <span class="mono" style="margin-left:10px">03/10 10:13 AM</span>
 </div>
 <div class="popwin"><i></i></div>
</div>
</div>
</body>
</html>
